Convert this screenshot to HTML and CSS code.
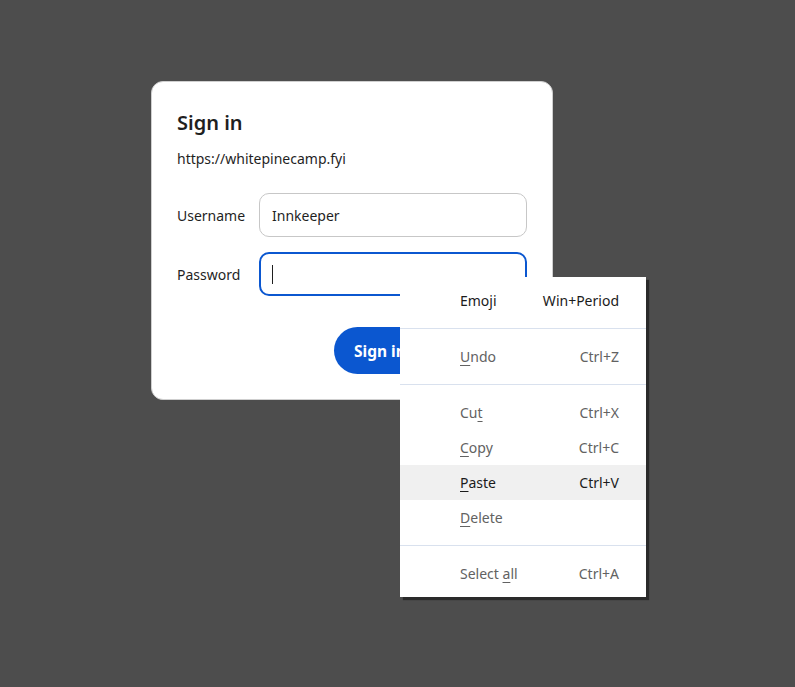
FILE: index.html
```html
<!DOCTYPE html>
<html lang="en">
<head>
<meta charset="utf-8">
<title>Sign in</title>
<link rel="stylesheet" href="styles.css">
</head>
<body>
<div class="page">
  <div class="dialog">
    <h1 class="title">Sign in</h1>
    <div class="origin">https://whitepinecamp.fyi</div>
    <div class="field">
      <label class="label">Username</label>
      <div class="input">Innkeeper</div>
    </div>
    <div class="field field-pw">
      <label class="label">Password</label>
      <div class="input input-focus"><span class="caret"></span></div>
    </div>
    <div class="actions">
      <button class="btn btn-primary">Sign in</button>
      <button class="btn btn-secondary">Cancel</button>
    </div>
  </div>

  <div class="menu">
    <div class="item enabled"><span class="name">Emoji</span><span class="key">Win+Period</span></div>
    <div class="sep"></div>
    <div class="item"><span class="name"><u>U</u>ndo</span><span class="key">Ctrl+Z</span></div>
    <div class="sep"></div>
    <div class="item"><span class="name">Cu<u>t</u></span><span class="key">Ctrl+X</span></div>
    <div class="item"><span class="name"><u>C</u>opy</span><span class="key">Ctrl+C</span></div>
    <div class="item enabled hover"><span class="name"><u>P</u>aste</span><span class="key">Ctrl+V</span></div>
    <div class="item"><span class="name"><u>D</u>elete</span><span class="key"></span></div>
    <div class="sep"></div>
    <div class="item"><span class="name">Select <u>a</u>ll</span><span class="key">Ctrl+A</span></div>
  </div>
</div>
</body>
</html>
```

FILE: styles.css
```css
html, body {
  margin: 0;
  padding: 0;
  background: #4d4d4d;
  height: 100%;
}
body {
  font-family: "Noto Sans", "Open Sans", Arial, sans-serif;
  color: #1f1f1f;
}
.page {
  position: relative;
  width: 795px;
  height: 687px;
  padding: 81px 0 0 151px;
  box-sizing: border-box;
}
.dialog {
  width: 402px;
  box-sizing: border-box;
  background: #ffffff;
  border: 1px solid #cfcfcf;
  border-radius: 12px;
  padding: 27px 25px 25px 25px;
}
.title {
  margin: 0;
  font-size: 20px;
  line-height: 28px;
  font-weight: 600;
  color: #1f1f1f;
}
.origin {
  margin-top: 12px;
  font-size: 14px;
  line-height: 20px;
  color: #1f1f1f;
}
.field {
  display: flex;
  align-items: center;
  margin-top: 24px;
}
.field-pw {
  margin-top: 15px;
}
.label {
  width: 82px;
  flex: none;
  font-size: 14px;
  color: #1f1f1f;
}
.input {
  flex: 1;
  height: 44px;
  box-sizing: border-box;
  border: 1px solid #c7c7c7;
  border-radius: 10px;
  padding: 0 12px;
  display: flex;
  align-items: center;
  font-size: 14px;
  color: #1f1f1f;
}
.input-focus {
  border: 2px solid #0b57d0;
  padding: 0 11px;
}
.caret {
  display: block;
  width: 1px;
  height: 19px;
  background: #1f1f1f;
}
.actions {
  display: flex;
  justify-content: flex-end;
  gap: 8px;
  margin-top: 31px;
}
.btn {
  height: 47px;
  border-radius: 24px;
  padding: 0 20px;
  font-family: inherit;
  font-size: 15.5px;
  font-weight: 700;
  border: none;
}
.btn-primary {
  background: #0b57d0;
  color: #ffffff;
}
.btn-secondary {
  background: #ffffff;
  color: #0b57d0;
  border: 1px solid #c7c7c7;
}
.menu {
  position: absolute;
  left: 400px;
  top: 277px;
  width: 246px;
  box-sizing: border-box;
  background: #ffffff;
  padding: 6px 0;
  box-shadow: 3px 3px 1px rgba(0, 0, 0, 0.45);
  font-size: 14px;
}
.item {
  display: flex;
  align-items: center;
  justify-content: space-between;
  height: 35px;
  padding: 0 27px 0 60px;
  color: #626262;
}
.item.enabled {
  color: #1b1b1b;
}
.item.hover {
  background: #f0f0f0;
}
.item u {
  text-underline-offset: 3px;
}
.sep {
  height: 1px;
  background: #d9e1ee;
  margin: 10px 0;
}
```
